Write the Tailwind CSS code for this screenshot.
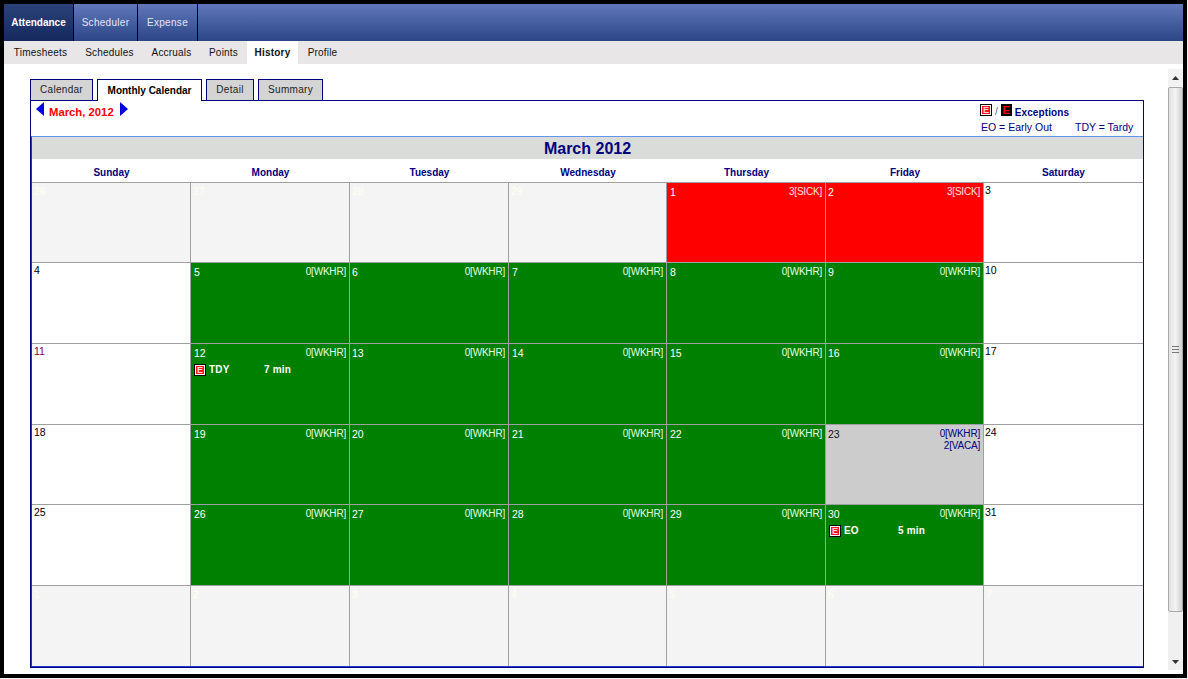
<!DOCTYPE html>
<html lang="en">
<head>
  <meta charset="UTF-8">
  <title>Monthly Calendar</title>
  <script src="https://cdn.jsdelivr.net/npm/@tailwindcss/browser@4"></script>
</head>
<body class="bg-[#f4f2f2] font-['Liberation_Sans',Arial,sans-serif] text-[10px] leading-[13px]">
<div class="w-[1187px] h-[678px] border-4 border-black bg-white flex flex-col overflow-hidden">

  <!-- top modules -->
  <div class="h-[37px] shrink-0 flex bg-gradient-to-b from-[#6179ba] to-[#2c4587] text-[#e4e8f4] tracking-[0.3px]">
    <div class="w-[70px] border-r border-black bg-gradient-to-b from-[#2a4279] to-[#16295f] text-white font-bold tracking-normal flex items-center justify-center">Attendance</div>
    <div class="w-[64px] border-r border-black flex items-center justify-center">Scheduler</div>
    <div class="w-[60px] border-r border-black flex items-center justify-center">Expense</div>
  </div>

  <!-- sub nav -->
  <div class="h-[23px] shrink-0 flex bg-[#e8e6e6] text-[#111111] pl-px tracking-[0.2px]">
    <div class="w-[71px] flex items-center justify-center">Timesheets</div>
    <div class="w-[67px] flex items-center justify-center">Schedules</div>
    <div class="w-[57px] flex items-center justify-center">Accruals</div>
    <div class="w-[47px] flex items-center justify-center">Points</div>
    <div class="w-[51px] bg-white font-bold flex items-center justify-center">History</div>
    <div class="w-[49px] flex items-center justify-center">Profile</div>
  </div>

  <div class="flex-1 flex pl-[26px]">
    <div class="w-[1114px] pt-[15px]">
      <!-- tabs -->
      <div class="flex items-start h-[21px] text-[#222222] tracking-[0.3px]">
        <div class="w-[63px] h-[21px] pb-[2px] border border-b-0 border-[#000080] bg-[#d4d4d4] flex items-center justify-center">Calendar</div>
        <div class="relative z-10 ml-[4px] w-[105px] h-[22px] border border-b-0 border-[#000080] bg-white text-black font-bold tracking-normal flex items-center justify-center">Monthly Calendar</div>
        <div class="ml-[4px] w-[48px] h-[21px] pb-[2px] border border-b-0 border-[#000080] bg-[#d4d4d4] flex items-center justify-center">Detail</div>
        <div class="ml-[4px] w-[65px] h-[21px] pb-[2px] border border-b-0 border-[#000080] bg-[#d4d4d4] flex items-center justify-center">Summary</div>
      </div>

      <!-- panel -->
      <div class="h-[568px] border border-[#000080] flex flex-col">
        <div class="h-[35px] shrink-0 flex justify-between">
          <div class="flex items-start pl-[5px] pt-px">
            <svg width="8" height="14" viewBox="0 0 8 14"><path d="M8 0V14L0 7Z" fill="#0000e0"/></svg>
            <span class="ml-[5px] mt-[3px] text-[11.3px] leading-[14px] font-bold text-[#ff0000]">March, 2012</span>
            <svg class="ml-[6px]" width="8" height="14" viewBox="0 0 8 14"><path d="M0 0V14L8 7Z" fill="#0000e0"/></svg>
          </div>
          <div class="w-[163px] text-[#000080] pt-[3px]">
            <div class="flex items-start h-[14px]">
              <span class="w-[12px] h-[12px] border border-black bg-white p-px flex"><span class="flex-1 bg-[#ff1020] text-[#ffd8d8] font-bold text-[9px] leading-[8px] text-center">E</span></span>
              <span class="ml-[3px] mt-px text-[#555599]">/</span>
              <span class="ml-[3px] w-[11px] h-[12px] bg-black text-[#ff0000] font-bold text-[11px] leading-[12px] text-center">E</span>
              <span class="ml-[3px] mt-[2px] font-bold tracking-[0.1px]">Exceptions</span>
            </div>
            <div class="flex mt-[3px] h-[13px] text-[10.5px] pl-px">
              <span class="w-[94px]">EO = Early Out</span>
              <span>TDY = Tardy</span>
            </div>
          </div>
        </div>

        <div class="flex-1 flex flex-col border-t border-t-[#6495ed] border-l border-l-[#2038d0] border-b border-b-[#2038d0]">
          <div class="h-[22px] shrink-0 bg-[#d9dcd8] text-[#000080] font-bold text-[16px] leading-[24px] text-center">March 2012</div>
          <div class="h-[23px] shrink-0 grid grid-cols-[159px_159px_159px_158px_159px_158px_159px] text-[#000080] font-bold text-center leading-[27px]">
            <div>Sunday</div><div>Monday</div><div>Tuesday</div><div>Wednesday</div><div>Thursday</div><div>Friday</div><div>Saturday</div>
          </div>

          <!-- calendar -->
          <div class="flex-1 grid grid-cols-[158px_158px_158px_157px_158px_157px_159px] grid-rows-[79px_80px_80px_79px_80px_80px] gap-px border-t border-[#a0a0a0] bg-[#a0a0a0] text-[10.5px]">
            <!-- week 1 -->
            <div class="bg-[#f4f4f4] text-[#fffff0] pl-[2px] pt-[2px]">26</div>
            <div class="bg-[#f4f4f4] text-[#fffff0] pl-[2px] pt-[2px]">27</div>
            <div class="bg-[#f4f4f4] text-[#fffff0] pl-[2px] pt-[2px]">28</div>
            <div class="bg-[#f4f4f4] text-[#fffff0] pl-[2px] pt-[2px]">29</div>
            <div class="bg-[#ff0000] text-white pl-[3px] pr-[3px] pt-[3px] flex justify-between"><span>1</span><span class="text-[10px] tracking-[-0.2px] leading-[12px] text-[#ffe0e0]">3[SICK]</span></div>
            <div class="bg-[#ff0000] text-white pl-[2px] pr-[3px] pt-[3px] flex justify-between"><span>2</span><span class="text-[10px] tracking-[-0.2px] leading-[12px] text-[#ffe0e0]">3[SICK]</span></div>
            <div class="bg-white text-black pl-px pt-px">3</div>
            <!-- week 2 -->
            <div class="bg-white text-black pl-[2px] pt-px">4</div>
            <div class="bg-[#008000] text-white pl-[3px] pr-[3px] pt-[3px] flex justify-between"><span>5</span><span class="text-[10px] tracking-[-0.2px] leading-[12px] text-[#e0ffe8]">0[WKHR]</span></div>
            <div class="bg-[#008000] text-white pl-[2px] pr-[3px] pt-[3px] flex justify-between"><span>6</span><span class="text-[10px] tracking-[-0.2px] leading-[12px] text-[#e0ffe8]">0[WKHR]</span></div>
            <div class="bg-[#008000] text-white pl-[3px] pr-[3px] pt-[3px] flex justify-between"><span>7</span><span class="text-[10px] tracking-[-0.2px] leading-[12px] text-[#e0ffe8]">0[WKHR]</span></div>
            <div class="bg-[#008000] text-white pl-[3px] pr-[3px] pt-[3px] flex justify-between"><span>8</span><span class="text-[10px] tracking-[-0.2px] leading-[12px] text-[#e0ffe8]">0[WKHR]</span></div>
            <div class="bg-[#008000] text-white pl-[2px] pr-[3px] pt-[3px] flex justify-between"><span>9</span><span class="text-[10px] tracking-[-0.2px] leading-[12px] text-[#e0ffe8]">0[WKHR]</span></div>
            <div class="bg-white text-black pl-px pt-px">10</div>
            <!-- week 3 -->
            <div class="bg-white text-[#800040] pl-[2px] pt-px">11</div>
            <div class="bg-[#008000] text-white pl-[3px] pr-[3px] pt-[3px]">
              <div class="flex justify-between"><span>12</span><span class="text-[10px] tracking-[-0.2px] leading-[12px] text-[#e0ffe8]">0[WKHR]</span></div>
              <div class="flex items-center mt-[3px] font-bold text-[10px] tracking-[0.2px]">
                <span class="w-[12px] h-[12px] border border-black bg-white p-px flex"><span class="flex-1 bg-[#ff1020] text-[#ffd8d8] text-[9px] tracking-normal leading-[8px] text-center">E</span></span>
                <span class="ml-[3px] w-[55px]">TDY</span><span>7 min</span>
              </div>
            </div>
            <div class="bg-[#008000] text-white pl-[2px] pr-[3px] pt-[3px] flex justify-between"><span>13</span><span class="text-[10px] tracking-[-0.2px] leading-[12px] text-[#e0ffe8]">0[WKHR]</span></div>
            <div class="bg-[#008000] text-white pl-[3px] pr-[3px] pt-[3px] flex justify-between"><span>14</span><span class="text-[10px] tracking-[-0.2px] leading-[12px] text-[#e0ffe8]">0[WKHR]</span></div>
            <div class="bg-[#008000] text-white pl-[3px] pr-[3px] pt-[3px] flex justify-between"><span>15</span><span class="text-[10px] tracking-[-0.2px] leading-[12px] text-[#e0ffe8]">0[WKHR]</span></div>
            <div class="bg-[#008000] text-white pl-[2px] pr-[3px] pt-[3px] flex justify-between"><span>16</span><span class="text-[10px] tracking-[-0.2px] leading-[12px] text-[#e0ffe8]">0[WKHR]</span></div>
            <div class="bg-white text-black pl-px pt-px">17</div>
            <!-- week 4 -->
            <div class="bg-white text-black pl-[2px] pt-px">18</div>
            <div class="bg-[#008000] text-white pl-[3px] pr-[3px] pt-[3px] flex justify-between"><span>19</span><span class="text-[10px] tracking-[-0.2px] leading-[12px] text-[#e0ffe8]">0[WKHR]</span></div>
            <div class="bg-[#008000] text-white pl-[2px] pr-[3px] pt-[3px] flex justify-between"><span>20</span><span class="text-[10px] tracking-[-0.2px] leading-[12px] text-[#e0ffe8]">0[WKHR]</span></div>
            <div class="bg-[#008000] text-white pl-[3px] pr-[3px] pt-[3px] flex justify-between"><span>21</span><span class="text-[10px] tracking-[-0.2px] leading-[12px] text-[#e0ffe8]">0[WKHR]</span></div>
            <div class="bg-[#008000] text-white pl-[3px] pr-[3px] pt-[3px] flex justify-between"><span>22</span><span class="text-[10px] tracking-[-0.2px] leading-[12px] text-[#e0ffe8]">0[WKHR]</span></div>
            <div class="bg-[#cccccc] text-[#111111] pl-[2px] pr-[3px] pt-[3px] flex justify-between"><span>23</span><span class="text-[10px] tracking-[-0.2px] leading-[12px] text-[#000080] text-right">0[WKHR]<br>2[VACA]</span></div>
            <div class="bg-white text-black pl-px pt-px">24</div>
            <!-- week 5 -->
            <div class="bg-white text-black pl-[2px] pt-px">25</div>
            <div class="bg-[#008000] text-white pl-[3px] pr-[3px] pt-[3px] flex justify-between"><span>26</span><span class="text-[10px] tracking-[-0.2px] leading-[12px] text-[#e0ffe8]">0[WKHR]</span></div>
            <div class="bg-[#008000] text-white pl-[2px] pr-[3px] pt-[3px] flex justify-between"><span>27</span><span class="text-[10px] tracking-[-0.2px] leading-[12px] text-[#e0ffe8]">0[WKHR]</span></div>
            <div class="bg-[#008000] text-white pl-[3px] pr-[3px] pt-[3px] flex justify-between"><span>28</span><span class="text-[10px] tracking-[-0.2px] leading-[12px] text-[#e0ffe8]">0[WKHR]</span></div>
            <div class="bg-[#008000] text-white pl-[3px] pr-[3px] pt-[3px] flex justify-between"><span>29</span><span class="text-[10px] tracking-[-0.2px] leading-[12px] text-[#e0ffe8]">0[WKHR]</span></div>
            <div class="bg-[#008000] text-white pl-[2px] pr-[3px] pt-[3px]">
              <div class="flex justify-between"><span>30</span><span class="text-[10px] tracking-[-0.2px] leading-[12px] text-[#e0ffe8]">0[WKHR]</span></div>
              <div class="flex items-center mt-[3px] font-bold text-[10px] tracking-[0.2px]">
                <span class="ml-px w-[12px] h-[12px] border border-black bg-white p-px flex"><span class="flex-1 bg-[#ff1020] text-[#ffd8d8] text-[9px] tracking-normal leading-[8px] text-center">E</span></span>
                <span class="ml-[3px] w-[54px]">EO</span><span>5 min</span>
              </div>
            </div>
            <div class="bg-white text-black pl-px pt-px">31</div>
            <!-- week 6 -->
            <div class="bg-[#f4f4f4] text-[#fffff0] pl-[2px] pt-[2px]">1</div>
            <div class="bg-[#f4f4f4] text-[#fffff0] pl-[2px] pt-[2px]">2</div>
            <div class="bg-[#f4f4f4] text-[#fffff0] pl-[2px] pt-[2px]">3</div>
            <div class="bg-[#f4f4f4] text-[#fffff0] pl-[2px] pt-[2px]">4</div>
            <div class="bg-[#f4f4f4] text-[#fffff0] pl-[2px] pt-[2px]">5</div>
            <div class="bg-[#f4f4f4] text-[#fffff0] pl-[2px] pt-[2px]">6</div>
            <div class="bg-[#f4f4f4] text-[#fffff0] pl-[2px] pt-[2px]">7</div>
          </div>
        </div>
      </div>
    </div>

    <!-- scrollbar -->
    <div class="ml-[24px] mt-[5px] w-[16px] h-[601px] bg-[#f0f0f0] flex flex-col">
      <div class="h-[18px] shrink-0 flex items-center justify-center bg-[#f2f2f2]">
        <svg width="7" height="4" viewBox="0 0 7 4"><path d="M3.5 0L7 4H0Z" fill="#333333"/></svg>
      </div>
      <div class="h-[525px] shrink-0 border border-[#a8a8a8] rounded-[2px] bg-gradient-to-r from-[#e2e2e2] via-[#f4f4f4] to-[#cfcfcf] flex items-center justify-center">
        <div class="w-[7px] h-[7px] border-y border-[#777777] flex items-center"><div class="w-full h-px bg-[#777777]"></div></div>
      </div>
      <div class="flex-1 flex items-end justify-center pb-[6px]">
        <svg width="7" height="4" viewBox="0 0 7 4"><path d="M0 0H7L3.5 4Z" fill="#333333"/></svg>
      </div>
    </div>
  </div>
</div>
</body>
</html>
